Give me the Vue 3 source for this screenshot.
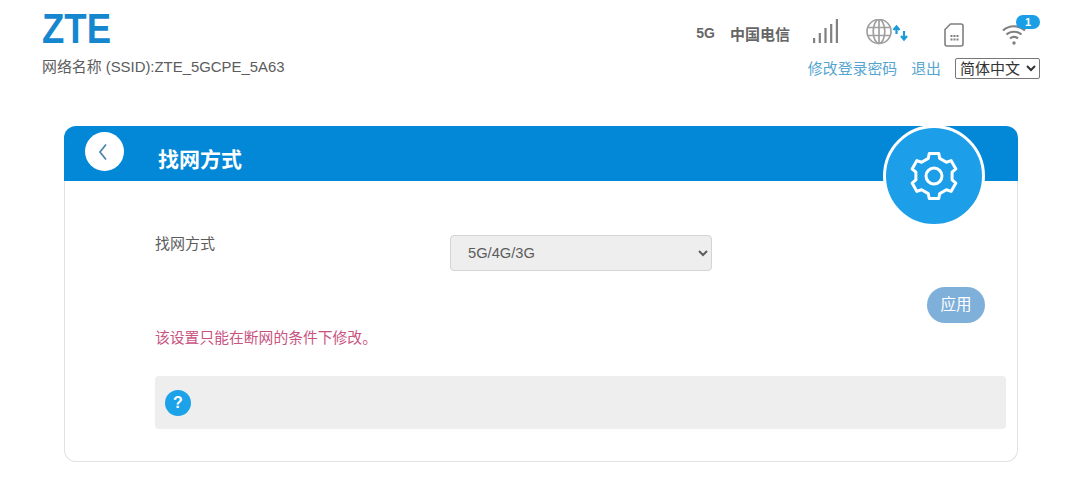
<script setup>
const bars = [[1, 19, 5], [6.700, 14, 10], [12.400, 9, 15], [18.100, 5, 19], [23.800, 0, 24]]

const gearPath = (() => {
  const pts = []
  for (let k = 0; k < 6; k++) {
    const c = -90 + 60 * k
    for (const [a, r] of [[-18, 18.500], [-12, 23], [12, 23], [18, 18.500]]) {
      const t = ((c + a) * Math.PI) / 180
      pts.push(`${(25 + r * Math.cos(t)).toFixed(2)} ${(25 + r * Math.sin(t)).toFixed(2)}`)
    }
  }
  return `M${pts.join('L')}Z`
})()
</script>

<template>
  <div class="page">
    <header class="top">
      <div class="brand">
        <div class="logo">ZTE</div>
        <div class="ssid">网络名称 (SSID):ZTE_5GCPE_5A63</div>
      </div>
      <div class="top-right">
        <div class="status">
          <span class="net">5G</span>
          <span class="carrier">中国电信</span>
          <svg class="i-signal" width="27" height="24" viewBox="0 0 27 24">
            <rect v-for="b in bars" :key="b[0]" :x="b[0]" :y="b[1]" width="2.200" :height="b[2]" fill="#808080" />
          </svg>
          <svg class="i-globe" width="44" height="26" viewBox="0 0 44 26" fill="none">
            <g stroke="#a0a0a0" stroke-width="1.700">
              <circle cx="13" cy="12.500" r="12" />
              <ellipse cx="13" cy="12.500" rx="5.800" ry="12" />
              <path d="M13 1v23M1.500 8.500h23M1.500 16.500h23" />
            </g>
            <path d="M30.500 8V15M27.500 11 30.500 7.500l3 3.500" stroke="#1a9ad6" stroke-width="2.200" />
            <path d="M38 12V20M35 17 38 20.500l3-3.500" stroke="#1a9ad6" stroke-width="2.200" />
          </svg>
          <svg class="i-sim" width="20" height="24" viewBox="0 0 20 24" fill="none">
            <path d="M6.500 1H17a2 2 0 0 1 2 2v18a2 2 0 0 1-2 2H3a2 2 0 0 1-2-2V6.500Z" stroke="#808080" stroke-width="1.600" />
            <g fill="#808080">
              <rect x="6.500" y="12" width="2" height="2" /><rect x="9.500" y="12" width="2" height="2" /><rect x="12.500" y="12" width="2" height="2" />
              <rect x="6.500" y="15.500" width="2" height="2" /><rect x="9.500" y="15.500" width="2" height="2" /><rect x="12.500" y="15.500" width="2" height="2" />
            </g>
          </svg>
          <div class="wifi">
            <svg width="24" height="22" viewBox="0 0 24 22" fill="none" stroke="#808080" stroke-width="2.200">
              <path d="M1 7.500C7 1.800 17 1.800 23 7.500" />
              <path d="M4.500 11.500C8.500 7.800 15.500 7.800 19.500 11.500" />
              <path d="M8 15.500C10.500 13.500 13.500 13.500 16 15.500" />
              <circle cx="12" cy="20" r="1.700" fill="#808080" stroke="none" />
            </svg>
            <span class="badge">1</span>
          </div>
        </div>
        <div class="links">
          <a class="link">修改登录密码</a>
          <a class="link">退出</a>
          <select class="lang">
            <option>简体中文</option>
          </select>
        </div>
      </div>
    </header>

    <main class="card">
      <div class="card-head">
        <button class="back" aria-label="back">
          <svg width="12" height="20" viewBox="0 0 12 20" fill="none">
            <path d="M9 2.500 3 10l6 7.500" stroke="#4f86ad" stroke-width="1.800" />
          </svg>
        </button>
        <h1 class="title">找网方式</h1>
      </div>
      <div class="gear">
        <svg width="50" height="50" viewBox="0 0 50 50" fill="none" stroke="#fff" stroke-width="3" stroke-linejoin="round">
          <path :d="gearPath" />
          <circle cx="25" cy="25" r="8" />
        </svg>
      </div>
      <div class="card-body">
        <div class="row">
          <label class="label">找网方式</label>
          <select class="mode">
            <option>5G/4G/3G</option>
          </select>
        </div>
        <div class="actions">
          <button class="apply">应用</button>
        </div>
        <p class="note">该设置只能在断网的条件下修改。</p>
        <div class="help">
          <span class="q">?</span>
        </div>
      </div>
    </main>
  </div>
</template>

<style scoped>
.page {
  width: 1080px;
  height: 495px;
  overflow: hidden;
  background: #fff;
  font-family: "Liberation Sans", "Noto Sans CJK SC", sans-serif;
  color: #5c5c5c;
}
.top {
  display: flex;
  justify-content: space-between;
  height: 126px;
  padding: 0 40px 0 42px;
  box-sizing: border-box;
}
.logo {
  margin-top: 7px;
  height: 43px;
  font-family: "Liberation Sans", sans-serif;
  font-weight: 700;
  font-size: 43px;
  line-height: 43px;
  transform: scaleX(0.85);
  transform-origin: left center;
  color: #1587cf;
}
.ssid {
  margin-top: 7px;
  font-size: 14.900px;
  line-height: 20px;
}
.top-right {
  display: flex;
  flex-direction: column;
  align-items: flex-end;
}
.status {
  display: flex;
  align-items: center;
  height: 34px;
  margin-top: 16px;
}
.net {
  font-size: 14px;
  font-weight: 700;
  color: #666;
  margin-right: 15px;
}
.carrier {
  font-size: 15px;
  font-weight: 700;
  color: #666;
  margin-right: 22px;
}
.i-signal {
  margin-right: 27px;
  margin-top: -4px;
}
.i-globe {
  margin-right: 34px;
  margin-top: -3px;
}
.i-sim {
  margin-right: 38px;
  margin-top: 3px;
}
.wifi {
  position: relative;
  width: 38px;
  height: 24px;
  margin-top: 4px;
}
.badge {
  position: absolute;
  left: 14px;
  top: -8px;
  width: 24px;
  height: 14px;
  border-radius: 7px;
  background: #1a9ee6;
  color: #fff;
  font-size: 11px;
  font-weight: 700;
  line-height: 14px;
  text-align: center;
}
.links {
  display: flex;
  align-items: center;
  gap: 14px;
  margin-top: 7px;
}
.link {
  padding-top: 2px;
  font-size: 14.900px;
  line-height: 21px;
  color: #55a5d0;
}
.lang {
  width: 85px;
  height: 21px;
  font-family: "Liberation Sans", "Noto Sans CJK SC", sans-serif;
  font-size: 15px;
  color: #333;
  background: #fff;
  border: 1px solid #777;
  border-radius: 2px;
  padding: 0;
}
.card {
  position: relative;
  margin-left: 64px;
  width: 954px;
  height: 336px;
  box-sizing: border-box;
  border: 1px solid #e2e2e2;
  border-top: 0;
  border-radius: 12px;
}
.card-head {
  display: flex;
  align-items: flex-start;
  height: 55px;
  margin: 0 -1px;
  padding-left: 21px;
  background: #0288d7;
  border-radius: 12px 12px 0 0;
}
.back {
  width: 39px;
  height: 39px;
  margin-top: 6px;
  padding: 0 4px 0 0;
  border: 0;
  border-radius: 50%;
  background: #fff;
  display: flex;
  align-items: center;
  justify-content: center;
}
.title {
  margin: 20px 0 0 34px;
  font-size: 21px;
  font-weight: 700;
  line-height: 28px;
  color: #fff;
}
.gear {
  position: absolute;
  left: 818px;
  top: -1px;
  width: 96px;
  height: 96px;
  border: 3px solid #fff;
  border-radius: 50%;
  background: #1c9fe8;
  display: flex;
  align-items: center;
  justify-content: center;
}
.card-body {
  padding: 0 11px 0 90px;
}
.row {
  display: grid;
  grid-template-columns: 295px 262px;
  padding-top: 54px;
}
.label {
  font-size: 15px;
  line-height: 18px;
}
.mode {
  height: 36px;
  box-sizing: border-box;
  padding: 0 13px;
  border: 1px solid #d4d4d4;
  border-radius: 4px;
  background: #eee;
  font-family: "Liberation Sans", sans-serif;
  font-size: 14.700px;
  color: #5c5c5c;
}
.actions {
  display: flex;
  justify-content: flex-end;
  padding: 16px 21px 0 0;
}
.apply {
  width: 58px;
  height: 36px;
  border: 0;
  border-radius: 18px;
  background: #7fb0da;
  color: #fff;
  font-family: "Liberation Sans", "Noto Sans CJK SC", sans-serif;
  font-size: 15.500px;
  padding: 0 0 5px;
}
.note {
  margin: 5px 0 0;
  font-size: 14.800px;
  line-height: 20px;
  color: #c9547f;
}
.help {
  display: flex;
  align-items: center;
  height: 53px;
  margin-top: 28px;
  padding-left: 10px;
  background: #eee;
  border-radius: 4px;
}
.q {
  width: 26px;
  height: 26px;
  border-radius: 50%;
  background: #1ba2e9;
  color: #fff;
  font-size: 16px;
  font-weight: 700;
  line-height: 26px;
  text-align: center;
}
</style>
